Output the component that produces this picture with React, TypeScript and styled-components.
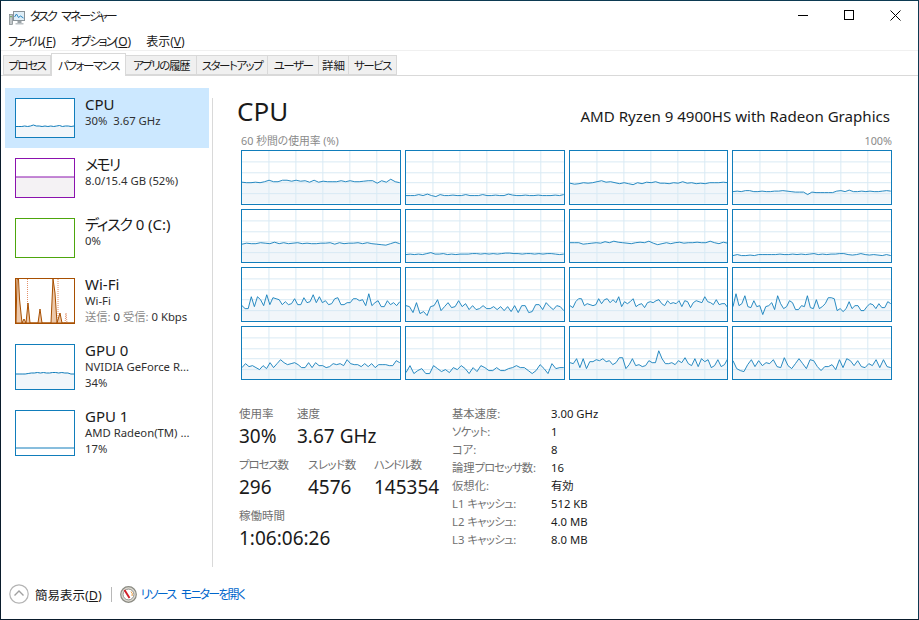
import styled, { createGlobalStyle } from 'styled-components';

const BLUE = '#117dbb';
const BLUE_FILL = '#f1f6fa';
const GRID = '#d9eaf4';

const GlobalStyle = createGlobalStyle`
    html, body {
        margin: 0;
        padding: 0;
        background: #fff;
    }
    body {
        font-family: "Noto Sans", "Noto Sans CJK JP", sans-serif;
        font-feature-settings: "palt";
        color: #1a1a1a;
    }
`;

/* Graph data, one sample per step, in pixels from the top of the graph */
const CORES: number[][] = [
    [31.5,32,32,31.5,32,31,29.5,31,31,29.5,29.5,30.5,29.5,30.5,30,31.5,29.5,31.5,30.5,31,31,31,30,31,30,31,31,30.5,30,30,32.5,30,31.5,28.5,31,32],
    [45,45,45,44,45,43.5,45,46,44,45,45,44.5,45,45,44,45,45,45,44,45,45,44.5,45,45,43.5,44.5,45,45,44.5,45,45,44.5,45,45,45,44.5,45,44],
    [32.5,33.5,33,32,32.5,32,31,30,31.5,31,32,33,32,33,34,32,33,31.5,32,31,32.5,32.5,33,32,32.5,31,32.5,32,33,32.5,33,32,32,32,31.5,32],
    [41,40.5,41,40,40,41,41,40.5,41,41,40.5,40.5,40,40.5,41,41.5,41.5,41.5,44,41.5,42,42,42,42,42,40.5,40,41,39.5,41,41,40.5,41,40.5,41,41,40.5,40,40.5],
    [34.5,33.5,34,34,33,33.5,34,32.5,34,33,34,33.5,33,34,33.5,34,34,33.5,33.5,33,34.5,33,34,33.5,33.5,33,34,33,34,34.5,35,35.5,34,32.5,34],
    [45,44.5,45,44.5,45,44,43,44.5,44.5,44,45,44.5,45,44.5,44.5,44.5,44,44,44.5,44,44.5,44,44.5,44,43.5,43.5,44,44,44.5,44,44,44.5,44,44.5,44,44,44.5,45,44.5],
    [33,33,33,34.5,34,33.5,33,33.5,32,33,31.5,32.5,33,33.5,34,33,32.5,33,31.5,33.5,35,34,33,34,33,32.5,33.5,33,33,32.5,33,33,31.5,33,34,32.5,33.5],
    [46,45,46,46,45.5,46,45,45,45,45,45,44.5,45,45,44.5,45,44.5,45,44.5,44,45,44.5,45,44.5,44.5,44,44,45,45.5,45,44,45,45.5,45,45.5,46,45,46],
    [38,41,41,29,39,29,32,38,27,37,30,31,32,37,34,37,36,31,37,37,30,35,34,27,35,29,35,33,37,36,31,30,37,37,35,35,31,31,33,32,38,26,38,35,33,39,39,33,37,35,38,34],
    [38,39,45,35,46,44,48,39,38,32,43,39,35,40,39,33,39,36,42,38,42,41,38,41,41,39,42,39,43,39,44,38,45,38,38,45,44,37,37,42,35,39,42,38,39,43],
    [38,40,34,31,31,38,36,37,38,37,31,36,32,31,35,32,35,29,39,34,36,34,31,39,37,36,40,35,34,35,33,32,36,38,33,36,35,36,33,39,33,34,40,35,33,34,35,29,34,35,37,32,37,36,36,40],
    [39,26,38,36,28,39,40,33,39,38,47,39,38,35,42,28,36,41,39,33,35,42,42,38,39,28,40,41,32,41,39,36,30,30,31,43,41,44,41,34,41,38,38,43,43,39,36,37,41,36,40,40,34,36],
    [41,37,40,39,41,43,39,42,36,41,37,33,36,38,37,36,38,41,41,36,41,36,39,39,41,40,37,38,37,39,33,37,38,38,40,37,40,37,41,38,38,38,39,39,34,36],
    [46,39,47,44,42,47,47,39,42,45,43,46,41,43,39,42,47,41,45,39,41,44,44,41,44,44,42,41,39,41,41,44,47,44,38,42,47,37,42,41,41],
    [36,37,32,41,32,42,35,35,33,34,32,35,34,38,36,31,31,42,38,32,39,38,40,39,34,36,36,24,32,37,37,36,38,34,36,31,37,39,32,40,32,35,33,41,39,33,40,38,32],
    [34,42,44,45,38,33,40,34,39,36,37,33,40,41,31,39,42,37,32,37,42,33,34,40,44,40,40,38,43,33,41,32,34,39,34,40,41,37,39,33,41,33,40,41],
];

const toPoints = (values: number[], width: number) =>
    values.map((v, i) => `${(i * width / (values.length - 1)).toFixed(1)},${v}`).join(' ');

const CoreChart = ({ values }: { values: number[] }) => (
    <ChartFrame>
        <ChartSvg viewBox="0 0 158 53" preserveAspectRatio="none">
            <polygon points={`0,53 ${toPoints(values, 158)} 158,53`} fill={BLUE_FILL} />
            {[27, 54, 81, 108, 135].map(x => <line key={x} x1={x} x2={x} y1={0} y2={53} stroke={GRID} />)}
            {[11, 22, 32, 43].map(y => <line key={y} x1={0} x2={158} y1={y} y2={y} stroke={GRID} />)}
            <polyline points={toPoints(values, 158)} fill="none" stroke={BLUE} strokeWidth={1} opacity={0.9} />
        </ChartSvg>
    </ChartFrame>
);

const Thumb = ({ colour, tall, fill, values }: { colour: string, tall?: boolean, fill?: string, values?: number[] }) => {
    const h = tall ? 44 : 38;
    return (
        <ThumbFrame $colour={colour} $tall={tall}>
            {values && (
                <ChartSvg viewBox={`0 0 58 ${h}`} preserveAspectRatio="none">
                    <polygon points={`0,${h} ${toPoints(values, 58)} 58,${h}`} fill={fill} />
                    <polyline points={toPoints(values, 58)} fill="none" stroke={colour} strokeWidth={1} />
                </ChartSvg>
            )}
        </ThumbFrame>
    );
};

const WifiThumb = () => (
    <ThumbFrame $colour="#a74f01" $tall>
        <ChartSvg viewBox="0 0 58 44" preserveAspectRatio="none">
            <line x1={11.5} x2={11.5} y1={0} y2={44} stroke="#e2906a" strokeDasharray="1 1" />
            <line x1={42} x2={42} y1={0} y2={44} stroke="#e2906a" strokeDasharray="1 1" />
            <polyline points="49,44 50,34 51,44" fill="none" stroke="#e2906a" strokeDasharray="1 1" />
            <polygon
                points="0,44 1,0 2.5,0 3.5,20 6,44 8,40 10,44 12,24 14,44 22,44 24,30 26,44 35,44 37,0 39,14 41,44 44,34 46,44 58,44"
                fill="#edc9ab"
                stroke="#a74f01"
                strokeWidth={1}
            />
        </ChartSvg>
    </ThumbFrame>
);

const AppIcon = () => (
    <svg width="16" height="15" viewBox="0 0 16 15">
        <rect x="0.5" y="3.5" width="3" height="10" fill="#c3c8ca" stroke="#7b8488" strokeWidth="0.7" />
        <rect x="1.3" y="5" width="1.4" height="1.2" fill="#5aa83c" />
        <rect x="4.5" y="0.5" width="11" height="9" fill="#dfeef7" stroke="#8a9398" />
        <polyline points="5.5,6 7.5,3 9.5,6.5 11.5,5 14.5,7" fill="none" stroke="#2a86c0" />
        <rect x="8.5" y="10" width="4" height="2" fill="#9aa2a6" />
        <rect x="6.5" y="12" width="8" height="1.5" fill="#bcc2c5" />
    </svg>
);

const UpCircle = () => (
    <svg width="20" height="20" viewBox="0 0 20 20">
        <circle cx="10" cy="10" r="9.2" fill="#fff" stroke="#b4b4b4" strokeWidth="1.2" />
        <polyline points="5.5,11.5 10,7 14.5,11.5" fill="none" stroke="#a0a0a0" strokeWidth="1.4" />
    </svg>
);

const MonitorIcon = () => (
    <svg width="17" height="17" viewBox="0 0 17 17">
        <circle cx="8.5" cy="8.5" r="7.8" fill="#dedbd2" stroke="#8a8a82" strokeWidth="1.2" />
        <circle cx="8.5" cy="8.5" r="5.4" fill="#fff" stroke="#6f6f6a" strokeWidth="0.7" />
        <line x1="4.5" y1="4" x2="9.5" y2="12" stroke="#d0202a" strokeWidth="1.9" />
        <path d="M11 5.5 A4 4 0 0 1 12 10" fill="none" stroke="#e8973a" strokeWidth="1" />
    </svg>
);

const App = () => (
    <Window>
        <GlobalStyle />
        <TitleBar>
            <TitleIcon><AppIcon /></TitleIcon>
            <TitleText><Kana $em={-0.17}>タスク マネージャー</Kana></TitleText>
            <WindowButtons>
                <WindowButton>
                    <svg width="10" height="10" viewBox="0 0 10 10"><line x1="0" x2="10" y1="5.5" y2="5.5" stroke="#000" /></svg>
                </WindowButton>
                <WindowButton>
                    <svg width="10" height="10" viewBox="0 0 10 10"><rect x="0.5" y="0.5" width="9" height="9" fill="none" stroke="#000" /></svg>
                </WindowButton>
                <WindowButton>
                    <svg width="11" height="11" viewBox="0 0 11 11"><path d="M0.5 0.5 L10.5 10.5 M10.5 0.5 L0.5 10.5" stroke="#000" fill="none" /></svg>
                </WindowButton>
            </WindowButtons>
        </TitleBar>

        <MenuBar>
            <MenuItem><Kana $em={-0.15}>ファイル</Kana>(<u>F</u>)</MenuItem>
            <MenuItem><Kana $em={-0.15}>オプション</Kana>(<u>O</u>)</MenuItem>
            <MenuItem>表示(<u>V</u>)</MenuItem>
        </MenuBar>

        <TabBar>
            <Tab $width={48}><Kana $em={-0.13}>プロセス</Kana></Tab>
            <Tab $width={75} $active><Kana $em={-0.13}>パフォーマンス</Kana></Tab>
            <Tab $width={71}><Kana $em={-0.13}>アプリの履歴</Kana></Tab>
            <Tab $width={71}><Kana $em={-0.13}>スタートアップ</Kana></Tab>
            <Tab $width={51}><Kana $em={-0.13}>ユーザー</Kana></Tab>
            <Tab $width={30}>詳細</Tab>
            <Tab $width={48}><Kana $em={-0.13}>サービス</Kana></Tab>
        </TabBar>

        <Body>
            <Sidebar>
                <SideItem $selected>
                    <Thumb colour={BLUE} fill={BLUE_FILL} values={[27.5,27.5,27.5,27,27.5,27,26,27,27,27.5,27,27.5,27,27.5,27,26.5,27.5,27,27,27.5,27]} />
                    <SideText>
                        <SideName>CPU</SideName>
                        <SideLine>30%&nbsp; 3.67 GHz</SideLine>
                    </SideText>
                </SideItem>
                <SideItem>
                    <Thumb colour="#8b12ae" fill="#f4f2f4" values={[18, 18]} />
                    <SideText>
                        <SideName><Kana $em={-0.12}>メモリ</Kana></SideName>
                        <SideLine>8.0/15.4 GB (52%)</SideLine>
                    </SideText>
                </SideItem>
                <SideItem>
                    <Thumb colour="#4da60c" />
                    <SideText>
                        <SideName><Kana $em={-0.08}>ディスク</Kana> 0 (C:)</SideName>
                        <SideLine>0%</SideLine>
                    </SideText>
                </SideItem>
                <SideItem>
                    <WifiThumb />
                    <SideText>
                        <SideName>Wi-Fi</SideName>
                        <SideLine>Wi-Fi</SideLine>
                        <SideLine><Dim>送信:</Dim> 0 <Dim>受信:</Dim> 0 Kbps</SideLine>
                    </SideText>
                </SideItem>
                <SideItem>
                    <Thumb colour={BLUE} tall fill={BLUE_FILL} values={[29,29,29,29,28.5,28,28,27.5,28,27.5,28,28,27.5,27.5,28,27.5,28,28,29,29]} />
                    <SideText>
                        <SideName>GPU 0</SideName>
                        <SideLine>NVIDIA GeForce R...</SideLine>
                        <SideLine>34%</SideLine>
                    </SideText>
                </SideItem>
                <SideItem>
                    <Thumb colour={BLUE} tall fill="#fff" values={[37, 37]} />
                    <SideText>
                        <SideName>GPU 1</SideName>
                        <SideLine>AMD Radeon(TM) ...</SideLine>
                        <SideLine>17%</SideLine>
                    </SideText>
                </SideItem>
            </Sidebar>

            <Divider />

            <Main>
                <Header>
                    <BigTitle>CPU</BigTitle>
                    <ModelName>AMD Ryzen 9 4900HS with Radeon Graphics</ModelName>
                </Header>
                <AxisRow>
                    <span>60 秒間の使用率 (%)</span>
                    <span>100%</span>
                </AxisRow>
                <ChartGrid>
                    {CORES.map((values, i) => <CoreChart key={i} values={values} />)}
                </ChartGrid>

                <Stats>
                    <LiveStats>
                        <StatRow>
                            <Stat $width={58}><StatLabel>使用率</StatLabel><StatValue>30%</StatValue></Stat>
                            <Stat><StatLabel>速度</StatLabel><StatValue>3.67 GHz</StatValue></Stat>
                        </StatRow>
                        <StatRow>
                            <Stat $width={69}><StatLabel><Kana $em={-0.1}>プロセス数</Kana></StatLabel><StatValue>296</StatValue></Stat>
                            <Stat $width={66}><StatLabel><Kana $em={-0.04}>スレッド数</Kana></StatLabel><StatValue>4576</StatValue></Stat>
                            <Stat><StatLabel><Kana $em={-0.1}>ハンドル数</Kana></StatLabel><StatValue>145354</StatValue></Stat>
                        </StatRow>
                        <StatRow>
                            <Stat><StatLabel>稼働時間</StatLabel><StatValue>1:06:06:26</StatValue></Stat>
                        </StatRow>
                    </LiveStats>
                    <SpecTable>
                        <SpecLabel>基本速度:</SpecLabel><SpecValue>3.00 GHz</SpecValue>
                        <SpecLabel><Kana $em={-0.05}>ソケット</Kana>:</SpecLabel><SpecValue>1</SpecValue>
                        <SpecLabel>コア:</SpecLabel><SpecValue>8</SpecValue>
                        <SpecLabel>論理<Kana $em={-0.08}>プロセッサ</Kana>数:</SpecLabel><SpecValue>16</SpecValue>
                        <SpecLabel>仮想化:</SpecLabel><SpecValue>有効</SpecValue>
                        <SpecLabel>L1 <Kana $em={-0.05}>キャッシュ</Kana>:</SpecLabel><SpecValue>512 KB</SpecValue>
                        <SpecLabel>L2 <Kana $em={-0.05}>キャッシュ</Kana>:</SpecLabel><SpecValue>4.0 MB</SpecValue>
                        <SpecLabel>L3 <Kana $em={-0.05}>キャッシュ</Kana>:</SpecLabel><SpecValue>8.0 MB</SpecValue>
                    </SpecTable>
                </Stats>
            </Main>
        </Body>

        <Footer>
            <UpCircle />
            <FooterText>簡易表示(<u>D</u>)</FooterText>
            <FooterSeparator />
            <MonitorIcon />
            <FooterLink><Kana $em={-0.15}>リソース モニターを開く</Kana></FooterLink>
        </Footer>
    </Window>
);

const Window = styled.div`
    box-sizing: border-box;
    width: 919px;
    height: 620px;
    display: flex;
    flex-direction: column;
    background: #fff;
    border: 1px solid #0c3a52;
    border-left-color: #0a1c2c;
    border-bottom-color: #0a1c2c;
    overflow: hidden;
`;

/* Meiryo UI has narrow kana, this pulls the wider Noto kana together */
const Kana = styled.span<{ $em: number }>`
    letter-spacing: ${props => props.$em}em;
    word-spacing: 0.35em;
`;

const TitleBar = styled.div`
    height: 30px;
    display: flex;
    align-items: center;
    padding-left: 8px;
    flex: none;
`;

const TitleIcon = styled.div`
    width: 16px;
    height: 15px;
    margin-right: 5px;
`;

const TitleText = styled.div`
    font-size: 12px;
    color: #1a1a1a;
`;

const WindowButtons = styled.div`
    margin-left: auto;
    display: flex;
    align-self: flex-start;
`;

const WindowButton = styled.div`
    width: 46px;
    height: 28px;
    display: flex;
    align-items: center;
    justify-content: center;
`;

const MenuBar = styled.div`
    height: 19px;
    flex: none;
    display: flex;
    align-items: center;
    gap: 15px;
    padding-left: 7px;
    border-bottom: 1px solid #f0f0f0;
`;

const MenuItem = styled.div`
    font-size: 12px;
`;

const TabBar = styled.div`
    height: 24px;
    flex: none;
    display: flex;
    align-items: flex-end;
    padding-left: 2px;
    border-bottom: 1px solid #d9d9d9;
`;

const Tab = styled.div<{ $width: number, $active?: boolean }>`
    box-sizing: border-box;
    width: ${props => props.$width}px;
    height: ${props => props.$active ? 23 : 20}px;
    margin-bottom: ${props => props.$active ? -1 : 0}px;
    display: flex;
    align-items: center;
    justify-content: center;
    font-size: 11.5px;
    white-space: nowrap;
    background: ${props => props.$active ? '#fff' : '#f0f0f0'};
    border: 1px solid #d9d9d9;
    border-left-width: ${props => props.$active ? 1 : 0}px;
    border-bottom-width: ${props => props.$active ? 0 : 1}px;
    &:first-child {
        border-left-width: 1px;
    }
`;

const Body = styled.div`
    flex: 1;
    display: flex;
    min-height: 0;
`;

const Sidebar = styled.div`
    width: 204px;
    margin: 12px 0 0 4px;
    flex: none;
`;

const SideItem = styled.div<{ $selected?: boolean }>`
    display: flex;
    gap: 10px;
    padding: 10px;
    background: ${props => props.$selected ? '#cce8ff' : 'transparent'};
`;

const ThumbFrame = styled.div<{ $colour: string, $tall?: boolean }>`
    box-sizing: border-box;
    width: 60px;
    height: ${props => props.$tall ? 46 : 40}px;
    flex: none;
    background: #fff;
    border: 1px solid ${props => props.$colour};
`;

const SideText = styled.div`
    margin: -3px 0 -5px;
    min-width: 0;
    white-space: nowrap;
`;

const SideName = styled.div`
    font-size: 15px;
    line-height: 18px;
    color: #1a1a1a;
`;

const SideLine = styled.div`
    font-size: 11.3px;
    line-height: 16px;
    color: #303030;
`;

const Dim = styled.span`
    color: #8a8a8a;
`;

const Divider = styled.div`
    width: 1px;
    margin: 22px 0 0 3px;
    background: #d9d9d9;
    flex: none;
`;

const Main = styled.div`
    flex: 1;
    min-width: 0;
    padding: 18px 26px 0 24px;
`;

const Header = styled.div`
    display: flex;
    align-items: center;
    justify-content: space-between;
    height: 36px;
    padding-right: 2px;
`;

const BigTitle = styled.div`
    font-size: 26px;
    line-height: 36px;
    margin-top: -2px;
    color: #1a1a1a;
`;

const ModelName = styled.div`
    font-size: 15.1px;
    color: #1a1a1a;
    padding-top: 8px;
`;

const AxisRow = styled.div`
    display: flex;
    justify-content: space-between;
    margin: 4px 0 2px 4px;
    height: 14px;
    font-size: 10.8px;
    line-height: 14px;
    color: #8a8a8a;
`;

const ChartGrid = styled.div`
    margin-left: 4px;
    height: 230px;
    display: grid;
    grid-template-columns: repeat(4, 1fr);
    grid-template-rows: repeat(4, 1fr);
    gap: 4px;
`;

const ChartFrame = styled.div`
    box-sizing: border-box;
    border: 1px solid ${BLUE};
    background: #fff;
    min-height: 0;
`;

const ChartSvg = styled.svg`
    display: block;
    width: 100%;
    height: 100%;
`;

const Stats = styled.div`
    display: flex;
    margin: 26px 0 0 2px;
`;

const LiveStats = styled.div`
    width: 213px;
    flex: none;
`;

const StatRow = styled.div`
    display: flex;
    margin-bottom: 7px;
`;

const Stat = styled.div<{ $width?: number }>`
    width: ${props => props.$width ? `${props.$width}px` : 'auto'};
    flex: none;
`;

const StatLabel = styled.div`
    font-size: 11.5px;
    line-height: 16px;
    color: #707070;
`;

const StatValue = styled.div`
    font-size: 19px;
    line-height: 28px;
    color: #1a1a1a;
    white-space: nowrap;
`;

const SpecTable = styled.div`
    margin-top: -2px;
    display: grid;
    grid-template-columns: 99px auto;
    grid-auto-rows: 18px;
    align-items: center;
    justify-content: start;
    align-self: flex-start;
    font-size: 11.3px;
`;

const SpecLabel = styled.div`
    color: #707070;
    white-space: nowrap;
`;

const SpecValue = styled.div`
    color: #1a1a1a;
    white-space: nowrap;
`;

const Footer = styled.div`
    height: 50px;
    flex: none;
    display: flex;
    align-items: center;
    padding: 2px 0 0 8px;
`;

const FooterText = styled.div`
    font-size: 12.5px;
    margin-left: 6px;
    color: #1a1a1a;
`;

const FooterSeparator = styled.div`
    width: 1px;
    height: 15px;
    margin: 0 8px 0 9px;
    background: #b8b8b8;
`;

const FooterLink = styled.div`
    font-size: 12px;
    margin-left: 4px;
    color: #0066cc;
`;

export default App;
